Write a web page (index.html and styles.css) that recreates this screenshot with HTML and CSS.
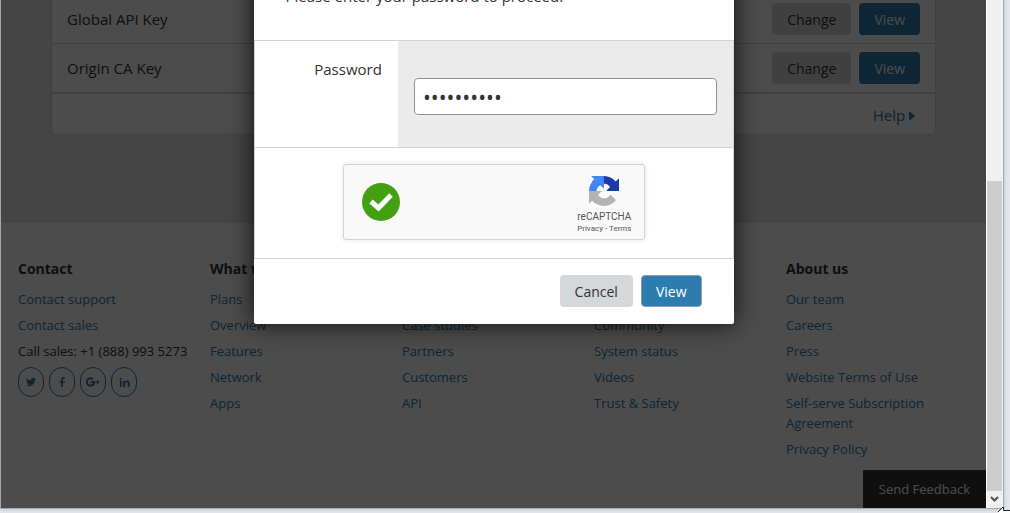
FILE: index.html
```html
<!DOCTYPE html>
<html lang="en">
<head>
    <meta charset="UTF-8">
    <meta name="viewport" content="width=device-width, initial-scale=1.0">
    <title>API Keys</title>
    <link rel="stylesheet" href="styles.css">
</head>
<body>
    <div class="window">
        <div class="page">
            <main class="main">
                <div class="card">
                    <div class="key-row">
                        <span class="key-name">Global API Key</span>
                        <button class="btn" type="button">Change</button>
                        <button class="btn btn-primary" type="button">View</button>
                    </div>
                    <div class="key-row">
                        <span class="key-name">Origin CA Key</span>
                        <button class="btn" type="button">Change</button>
                        <button class="btn btn-primary" type="button">View</button>
                    </div>
                    <div class="card-footer">
                        <a class="help" href="#">Help
                            <svg width="6" height="10" viewBox="0 0 6 10"><path d="M0 0l6 5-6 5z" fill="currentColor"/></svg>
                        </a>
                    </div>
                </div>
            </main>

            <footer class="footer">
                <div class="footer-col">
                    <h3>Contact</h3>
                    <ul>
                        <li><a href="#">Contact support</a></li>
                        <li><a href="#">Contact sales</a></li>
                        <li>Call sales: +1 (888) 993 5273</li>
                    </ul>
                    <div class="social">
                        <a href="#" aria-label="Twitter">
                            <svg width="10" height="10" viewBox="0 0 24 24"><path d="M24 4.6a10 10 0 0 1-2.8.8 5 5 0 0 0 2.1-2.7 10 10 0 0 1-3.1 1.2 4.9 4.9 0 0 0-8.4 4.5A14 14 0 0 1 1.7 3.2a4.9 4.9 0 0 0 1.5 6.6 5 5 0 0 1-2.2-.6 4.9 4.9 0 0 0 3.9 4.9 5 5 0 0 1-2.2.1 4.9 4.9 0 0 0 4.6 3.400A9.9 9.9 0 0 1 0 19.6 14 14 0 0 0 21.5 7.1 10 10 0 0 0 24 4.6z"/></svg>
                        </a>
                        <a href="#" aria-label="Facebook">
                            <svg width="10" height="10" viewBox="0 0 12 12"><path d="M5 12V7H3V5h2V3.200C5 1.100 6.200 0 8 0h1.500v2H8.400C7.500 2 7.200 2.400 7.200 3.200V5h2.200l-.3 2H7.200v5z"/></svg>
                        </a>
                        <a href="#" aria-label="Google Plus">
                            <svg width="14" height="12" viewBox="0 0 14 12"><path d="M4.500 5v2h2.500C6.700 8.200 5.800 8.700 4.600 8.700a2.700 2.700 0 1 1 1.700-4.800l1.400-1.400A4.700 4.700 0 1 0 4.600 10.700C7.400 10.700 9.200 8.800 9.200 6q0-.5-.1-1zM11 4v1.400H9.800v1.200H11V8h1.300V6.600h1.500V5.400h-1.500V4z"/></svg>
                        </a>
                        <a href="#" aria-label="LinkedIn">
                            <svg width="11" height="11" viewBox="0 0 12 12"><path d="M1 4h2v7H1zM2 .8a1.200 1.200 0 1 1 0 2.400 1.200 1.200 0 0 1 0-2.400zM4.600 4h2v1C7.100 4.200 7.900 3.800 8.900 3.800c2 0 2.700 1.200 2.700 3.200v4h-2V7.400c0-1.100-.3-1.800-1.300-1.800S6.700 6.300 6.700 7.400V11H4.600z"/></svg>
                        </a>
                    </div>
                </div>
                <div class="footer-col">
                    <h3>What we do</h3>
                    <ul>
                        <li><a href="#">Plans</a></li>
                        <li><a href="#">Overview</a></li>
                        <li><a href="#">Features</a></li>
                        <li><a href="#">Network</a></li>
                        <li><a href="#">Apps</a></li>
                    </ul>
                </div>
                <div class="footer-col footer-col-short">
                    <ul>
                        <li><a href="#">Case studies</a></li>
                        <li><a href="#">Partners</a></li>
                        <li><a href="#">Customers</a></li>
                        <li><a href="#">API</a></li>
                    </ul>
                </div>
                <div class="footer-col footer-col-short">
                    <ul>
                        <li><a href="#">Community</a></li>
                        <li><a href="#">System status</a></li>
                        <li><a href="#">Videos</a></li>
                        <li><a href="#">Trust &amp; Safety</a></li>
                    </ul>
                </div>
                <div class="footer-col">
                    <h3>About us</h3>
                    <ul>
                        <li><a href="#">Our team</a></li>
                        <li><a href="#">Careers</a></li>
                        <li><a href="#">Press</a></li>
                        <li><a href="#">Website Terms of Use</a></li>
                        <li><a href="#">Self-serve Subscription Agreement</a></li>
                        <li><a href="#">Privacy Policy</a></li>
                    </ul>
                </div>
            </footer>

            <button class="feedback" type="button">Send Feedback</button>

            <div class="overlay">
                <form class="modal">
                    <p class="modal-intro">Please enter your password to proceed.</p>
                    <div class="modal-body">
                        <div class="field">
                            <label for="password">Password</label>
                            <div class="control">
                                <input type="password" id="password" value="abcdefghij">
                            </div>
                        </div>
                        <div class="captcha-row">
                            <div class="captcha">
                                <svg width="38" height="38" viewBox="0 0 38 38">
                                    <circle cx="19" cy="19" r="19" fill="#43a010"/>
                                    <path d="M9 18.500l7.500 6.500 12.500-13" fill="none" stroke="#fff" stroke-width="5"/>
                                </svg>
                                <div class="captcha-brand">
                                    <svg width="30" height="30" viewBox="0 0 64 64">
                                        <path fill="#1c3aa9" d="M64 31.955l-.033-1.370V4.687l-7.160 7.160C50.948 4.674 42.033.093 32.050.093c-10.400 0-19.622 4.960-25.458 12.640l11.736 11.860a15.550 15.550 0 0 1 4.754-5.334c2.050-1.600 4.952-2.906 8.968-2.906.485 0 .860.057 1.135.163 4.976.393 9.288 3.140 11.828 7.124l-8.307 8.307L64 31.953"/>
                                        <path fill="#4285f4" d="M31.862.094l-1.370.033H4.594l7.160 7.160C4.580 13.147 0 22.060 0 32.046c0 10.400 4.960 19.622 12.640 25.458L24.500 45.768a15.550 15.550 0 0 1-5.334-4.754c-1.600-2.050-2.906-4.952-2.906-8.968 0-.485.057-.860.163-1.135.393-4.976 3.140-9.288 7.124-11.828l8.307 8.307L31.860.095"/>
                                        <path fill="#b3b3b3" d="M.001 32.045l.033 1.370v25.898l7.160-7.160c5.860 7.173 14.774 11.754 24.760 11.754 10.400 0 19.622-4.960 25.458-12.640l-11.736-11.860a15.550 15.550 0 0 1-4.754 5.334c-2.050 1.600-4.952 2.906-8.968 2.906-.485 0-.860-.057-1.135-.163-4.976-.393-9.288-3.140-11.828-7.124l8.307-8.307c-10.522.040-22.400.066-27.295-.005"/>
                                    </svg>
                                    <span class="captcha-name">reCAPTCHA</span>
                                    <span class="captcha-links"><a href="#">Privacy</a> - <a href="#">Terms</a></span>
                                </div>
                            </div>
                        </div>
                    </div>
                    <div class="modal-actions">
                        <button class="btn" type="button">Cancel</button>
                        <button class="btn btn-primary btn-focus" type="submit">View</button>
                    </div>
                </form>
            </div>
        </div>

        <div class="scrollbar">
            <div class="thumb"></div>
            <div class="scroll-arrow">
                <svg width="9" height="7" viewBox="0 0 9 7"><path d="M1 1l3.500 3.500L8 1" fill="none" stroke="#505050" stroke-width="2"/></svg>
            </div>
        </div>
    </div>
    <svg class="cursor" width="12" height="6" viewBox="0 0 12 6"><path d="M5 0L0 6h12V3H6V0z" fill="#fff"/><path d="M5 0L0 5M5.500 0v3.500H12" fill="none" stroke="#222"/></svg>
</body>
</html>
```

FILE: styles.css
```css
* {
    box-sizing: border-box;
}

body {
    margin: 0;
    height: 100vh;
    overflow: hidden;
    background-color: #e3e7ec;
    font-family: "Open Sans", "Noto Sans", sans-serif;
    font-size: 15px;
    color: #333;
}

a {
    color: #2c7cb0;
    text-decoration: none;
}

/* browser window */
.window {
    display: flex;
    height: calc(100vh - 4px);
    margin-right: 6px;
    border: 1px solid #9faab8;
    border-top: none;
    box-shadow: 0 0 4px #b5bcc6;
}

.page {
    position: relative;
    flex: 1;
    overflow: hidden;
    background-color: #fff;
}

.scrollbar {
    display: flex;
    flex-direction: column;
    width: 17px;
    padding: 181px 1px 0 0;
    background-color: #f0f0f0;
    border-left: 1px solid #fff;
}

.thumb {
    flex: 1;
    background-color: #cdcdcd;
}

.scroll-arrow {
    display: flex;
    align-items: center;
    justify-content: center;
    height: 17px;
}

/* api keys */
.main {
    display: flow-root;
    padding: 0 50px 88px;
    background-color: #e8e8e8;
}

.card {
    margin-top: -6px;
    background-color: #fff;
    border: 1px solid #dadada;
    border-radius: 4px;
}

.key-row {
    display: flex;
    align-items: center;
    gap: 8px;
    height: 49px;
    padding: 0 15px;
    border-bottom: 1px solid #dadada;
}

.key-name {
    flex: 1;
}

.btn {
    height: 32px;
    padding: 0 15px;
    border: none;
    border-radius: 4px;
    background-color: #d5d7d8;
    color: #333;
    font-family: inherit;
    font-size: 14px;
    cursor: pointer;
}

.btn-primary {
    background-color: #2c7cb0;
    color: #fff;
}

.btn-focus {
    border: 1px solid #8f9aa8;
    padding: 0 14px;
}

.card-footer {
    display: flex;
    align-items: center;
    justify-content: flex-end;
    height: 41px;
    padding: 2px 20px 0;
    border-top: 1px solid #dadada;
}

/* footer */
.footer {
    display: grid;
    grid-template-columns: repeat(5, 1fr);
    padding: 36px 8px 40px 17px;
    font-size: 13px;
    line-height: 20px;
}

.footer h3 {
    margin: 0 0 10px;
    font-size: 14px;
}

.footer ul {
    margin: 0;
    padding: 0;
    list-style: none;
}

.footer li {
    margin-bottom: 6px;
    padding-right: 30px;
}

.footer-col:first-child li {
    padding-right: 0;
}

.footer-col-short {
    padding-top: 56px;
}

.social {
    display: flex;
    gap: 5px;
}

.social a {
    display: flex;
    align-items: center;
    justify-content: center;
    width: 26px;
    height: 30px;
    border: 1px solid #2c7cb0;
    border-radius: 13px;
}

.social svg {
    fill: #2c7cb0;
}

.feedback {
    position: absolute;
    right: 0;
    bottom: 0;
    height: 38px;
    padding: 0 16px;
    border: none;
    background-color: #333;
    color: #fff;
    font-family: inherit;
    font-size: 13px;
}

/* password modal */
.overlay {
    position: absolute;
    inset: 0;
    display: flex;
    align-items: flex-start;
    justify-content: center;
    background-color: rgba(0, 0, 0, 0.7);
}

.modal {
    width: 480px;
    margin-top: -40px;
    background-color: #fff;
    border-radius: 2px;
    box-shadow: 0 0 25px rgba(0, 0, 0, 0.8);
}

.modal-intro {
    height: 80px;
    margin: 0;
    padding: 26px 32px;
    line-height: 20px;
}

.modal-body {
    border: 1px solid #d0d2d3;
}

.field {
    display: flex;
    height: 106px;
}

.field label {
    width: 30%;
    padding: 18px 16px;
    text-align: right;
    line-height: 20px;
}

.control {
    flex: 1;
    padding: 37px 16px;
    background-color: #ebebeb;
}

.control input {
    width: 100%;
    height: 37px;
    padding: 0 8px;
    border: 1px solid #8f929b;
    border-radius: 4px;
    background-color: #fff;
    color: #333;
    font-family: inherit;
    font-size: 21px;
}

.captcha-row {
    display: flex;
    justify-content: center;
    padding: 16px 16px 18px;
    border-top: 1px solid #d0d2d3;
}

.captcha {
    display: flex;
    align-items: center;
    justify-content: space-between;
    width: 302px;
    height: 76px;
    padding: 0 12px 0 18px;
    border: 1px solid #d3d3d3;
    border-radius: 3px;
    background-color: #f9f9f9;
    box-shadow: 0 0 4px 1px rgba(0, 0, 0, 0.08);
}

.captcha-brand {
    display: flex;
    flex-direction: column;
    align-items: center;
    padding-top: 6px;
    font-family: Roboto, sans-serif;
    color: #555;
}

.captcha-name {
    margin-top: 5px;
    font-size: 10px;
    line-height: 12px;
}

.captcha-links {
    font-size: 8px;
    line-height: 12px;
}

.captcha-links a {
    color: #555;
}

.modal-actions {
    display: flex;
    justify-content: flex-end;
    gap: 8px;
    padding: 16px 32px 17px;
}

.cursor {
    position: absolute;
    right: 0;
    bottom: 0;
}
```
